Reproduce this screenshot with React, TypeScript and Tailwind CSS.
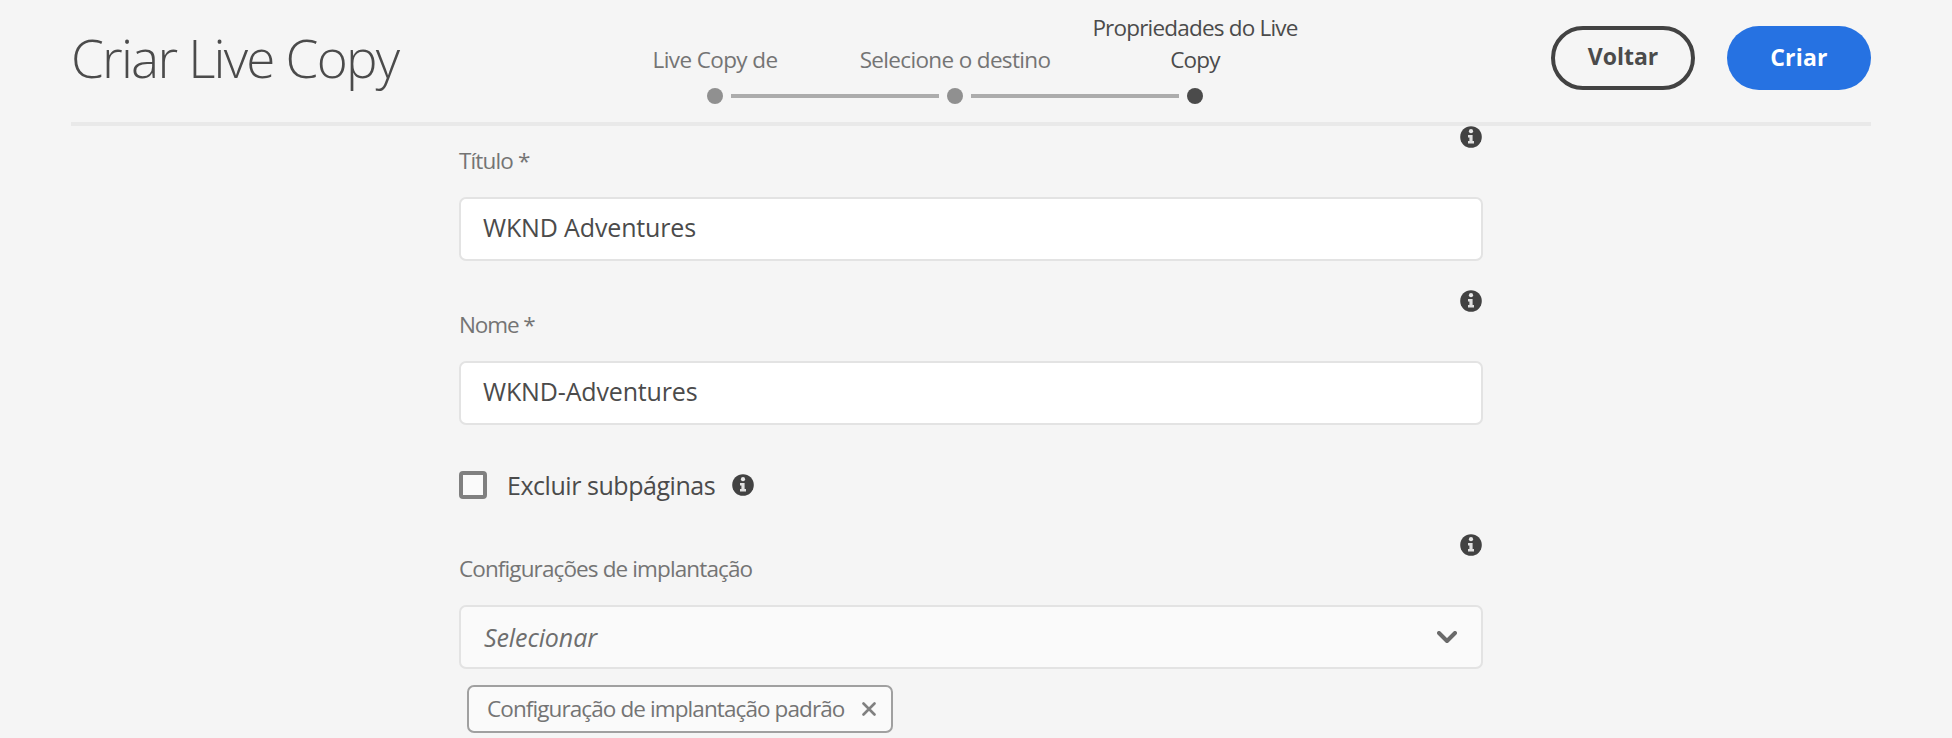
import type { ReactNode } from "react";

function InfoIcon() {
  return (
    <svg width="22" height="22" viewBox="0 0 22 22" aria-hidden="true" className="mr-px block shrink-0">
      <circle cx="11" cy="11" r="10.8" fill="#424242" />
      <circle cx="11" cy="5.2" r="2.1" fill="#e8e8e8" />
      <path d="M8 9h4.6v6H14v2.6H8V15h1.4v-3.4H8z" fill="#e0e0e0" />
    </svg>
  );
}

type StepProps = { label: string; active?: boolean; last?: boolean; tracking: string };

function Step({ label, active, last, tracking }: StepProps) {
  return (
    <li className="flex w-60 flex-col items-center">
      <div className="flex h-16 w-60 items-end justify-center">
        <span
          className={`px-2 text-center text-[22.5px] leading-8 ${tracking} ${
            active ? "text-[#4b4b4b]" : "text-[#747474]"
          }`}
        >
          {label}
        </span>
      </div>
      <div className="mt-3 flex h-4 w-4 items-center">
        <span className={`size-4 shrink-0 rounded-full ${active ? "bg-[#4b4b4b]" : "bg-[#909090]"}`} />
        {!last && <span className="ml-2 h-1 w-52 shrink-0 bg-[#acacac]" />}
      </div>
    </li>
  );
}

type FieldProps = { label: string; tracking: string; children: ReactNode };

function Field({ label, tracking, children }: FieldProps) {
  return (
    <div>
      <div className="flex items-start justify-between">
        <label className={`pt-[19px] text-[22.5px] leading-8 text-[#747474] ${tracking}`}>{label}</label>
        <InfoIcon />
      </div>
      <div className="mt-5">{children}</div>
    </div>
  );
}

function TextBox({ value }: { value: string }) {
  return (
    <div className="flex h-16 items-center rounded-[7px] border-2 border-[#e3e3e3] bg-white px-[22px] pb-0.5 text-[25px] tracking-[-0.15px] text-[#4b4b4b]">
      {value}
    </div>
  );
}

export default function App() {
  return (
    <div className="h-[738px] w-[1952px] overflow-hidden bg-[#f5f5f5] font-['Open_Sans','Noto_Sans',sans-serif]">
      <header className="ml-[71px] grid h-[126px] w-[1800px] grid-cols-[524px_720px_1fr] border-b-4 border-[#e9e9e9]">
        <h1 className="pt-[26px] text-[53px] leading-[64px] font-light tracking-[-1.8px] whitespace-nowrap text-[#4b4b4b]">
          Criar Live Copy
        </h1>
        <ol className="flex pt-3">
          <Step label="Live Copy de" tracking="tracking-[-0.6px]" />
          <Step label="Selecione o destino" tracking="tracking-[-0.65px]" />
          <Step label="Propriedades do Live Copy" tracking="tracking-[-0.8px]" active last />
        </ol>
        <div className="flex justify-end gap-8 pt-[26px] text-[23px] font-bold">
          <button className="h-16 w-36 rounded-full border-4 border-[#424242] pb-1 leading-8 text-[#4b4b4b]">
            Voltar
          </button>
          <button className="h-16 w-36 rounded-full bg-[#2672e2] pb-0.5 leading-8 tracking-[0.2px] text-white">
            Criar
          </button>
        </div>
      </header>

      <main className="ml-[459px] w-[1024px]">
        <Field label="Título *" tracking="tracking-[-0.85px]">
          <TextBox value="WKND Adventures" />
        </Field>
        <div className="mt-[29px]">
          <Field label="Nome *" tracking="tracking-[-1.1px]">
            <TextBox value="WKND-Adventures" />
          </Field>
        </div>

        <div className="mt-[46px] flex h-7 items-center">
          <span className="size-7 rounded-[4px] border-4 border-[#808080] bg-[#fafafa]" />
          <span className="ml-5 w-[225px] text-[25px] leading-7 tracking-[-0.45px] whitespace-nowrap text-[#4b4b4b]">
            Excluir subpáginas
          </span>
          <InfoIcon />
        </div>

        <div className="mt-[35px]">
          <Field label="Configurações de implantação" tracking="tracking-[-0.88px]">
            <div className="flex h-16 items-center justify-between rounded-[7px] border-2 border-[#e3e3e3] bg-[#fafafa] pr-6 pl-[23px] text-[25px] tracking-[-0.1px] text-[#6e6e6e] italic">
              <span className="pt-0.5">Selecionar</span>
              <svg width="20" height="13" viewBox="0 0 20 13" aria-hidden="true">
                <path
                  d="M2 2l8 8 8-8"
                  fill="none"
                  stroke="#6a6a6a"
                  strokeWidth="4"
                  strokeLinecap="round"
                  strokeLinejoin="round"
                />
              </svg>
            </div>
          </Field>
        </div>

        <div className="mt-4 ml-2 flex h-12 w-[426px] items-center justify-between rounded-[7px] border-2 border-[#a0a0a0] bg-[#fafafa] pr-[15px] pl-[18px]">
          <span className="text-[22.5px] leading-8 tracking-[-0.9px] whitespace-nowrap text-[#747474]">
            Configuração de implantação padrão
          </span>
          <svg width="14" height="14" viewBox="0 0 14 14" aria-hidden="true">
            <path d="M1.5 1.5l11 11M12.5 1.5l-11 11" stroke="#808080" strokeWidth="2.6" strokeLinecap="round" />
          </svg>
        </div>
      </main>
    </div>
  );
}
